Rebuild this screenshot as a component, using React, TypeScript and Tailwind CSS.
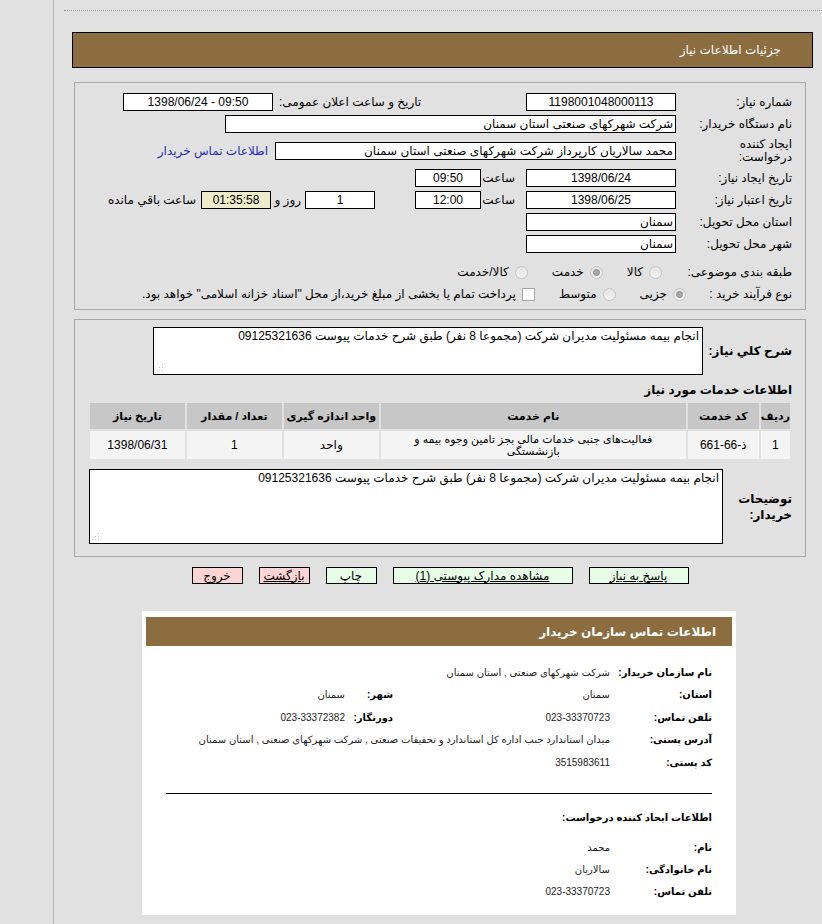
import React from 'react';

const Box = ({ w, children, align = 'center', bg = 'bg-white', ltr }: { w: string; children?: React.ReactNode; align?: 'center' | 'start'; bg?: string; ltr?: boolean }) => (
  <div dir={ltr ? 'ltr' : undefined} className={`h-[18px] shrink-0 border border-black ${w} ${bg} flex items-center ${align === 'center' ? 'justify-center' : 'justify-start'} px-[2px] text-[12px] leading-none whitespace-nowrap overflow-hidden`}>
    {children}
  </div>
);

const Radio = ({ checked }: { checked?: boolean }) => (
  <span className="w-[13px] h-[13px] shrink-0 rounded-full border border-[#c4c4c4] bg-gradient-to-b from-[#e4e4e4] to-[#f4f4f4] flex items-center justify-center">
    {checked && <span className="w-[7px] h-[7px] rounded-full border border-[#8a8a8a] bg-[#a8a8a8]" />}
  </span>
);

const Grip = () => (
  <svg className="absolute left-[2px] bottom-[2px]" width="8" height="8" viewBox="0 0 8 8">
    <rect x="6" y="0" width="1" height="1" fill="#c8c8c8" />
    <rect x="3" y="3" width="1" height="1" fill="#c8c8c8" />
    <rect x="6" y="3" width="1" height="1" fill="#c8c8c8" />
    <rect x="0" y="6" width="1" height="1" fill="#c8c8c8" />
    <rect x="3" y="6" width="1" height="1" fill="#c8c8c8" />
    <rect x="6" y="6" width="1" height="1" fill="#c8c8c8" />
  </svg>
);

const Label = ({ children, w = 'w-[116px]' }: { children: React.ReactNode; w?: string }) => (
  <div className={`${w} shrink-0 text-[12px] leading-[13px] whitespace-nowrap`}>{children}</div>
);

const desc = 'انجام بیمه مسئولیت مدیران شرکت (مجموعا 8 نفر) طبق شرح خدمات پیوست 09125321636';

const ContactRow = ({ label, value, label2, value2, h = 'h-[22px]' }: { label: string; value: string; label2?: string; value2?: string; h?: string }) => (
  <div className={`flex items-center ${h}`}>
    <div className="w-[102px] shrink-0 font-bold text-[10px] whitespace-nowrap">{label}</div>
    <div className="w-[217px] shrink-0 text-[10px] text-[#222] whitespace-nowrap">{value}</div>
    {label2 && <div className="w-[48px] shrink-0 font-bold text-[10px] whitespace-nowrap">{label2}</div>}
    {value2 && <div className="text-[10px] text-[#222] whitespace-nowrap">{value2}</div>}
  </div>
);

export default function App() {
  return (
    <div className="min-h-screen bg-[#e1e1e1] flex font-['Liberation_Sans','DejaVu_Sans',sans-serif] text-black overflow-hidden">
      <div className="w-[54px] shrink-0 border-r border-[#b4b4b4]" />
      <div className="flex-1 min-w-0 pb-[10px]" dir="rtl">
        <div className="pt-[10px] ml-[10px]">
          <div className="border-t border-dotted border-[#9a9a9a]" />
        </div>

        {/* header */}
        <div className="mt-[21px] ml-[18px] mr-[9px] h-[36px] bg-[#8c6d40] border border-black flex items-center pr-[31px] text-white text-[12px]">
          جزئیات اطلاعات نیاز
        </div>

        {/* panel 1 */}
        <div className="mt-[14px] ml-[20px] mr-[16px] border border-[#a8a8a8] pt-[8px] pb-[4px] pr-[13px] pl-[48px]">
          <div className="flex items-center h-[22px]">
            <Label>شماره نیاز:</Label>
            <Box w="w-[150px]">1198001048000113</Box>
            <div className="flex-1 flex items-center justify-end">
              <span className="text-[12px] whitespace-nowrap">تاریخ و ساعت اعلان عمومی:</span>
              <div className="mr-[6px]"><Box w="w-[150px]" ltr>1398/06/24 - 09:50</Box></div>
            </div>
          </div>
          <div className="flex items-center h-[22px]">
            <Label>نام دستگاه خریدار:</Label>
            <Box w="w-[451px]" align="start">شرکت شهرکهای صنعتی استان سمنان</Box>
          </div>
          <div className="flex items-center h-[32px]">
            <Label>ایجاد کننده<br />درخواست:</Label>
            <Box w="w-[401px]" align="start">محمد سالاریان کارپرداز شرکت شهرکهای صنعتی استان سمنان</Box>
            <span className="mr-[7px] text-[12px] text-[#2b2bb0] whitespace-nowrap">اطلاعات تماس خریدار</span>
          </div>
          <div className="flex items-center h-[22px]">
            <Label>تاریخ ایجاد نیاز:</Label>
            <Box w="w-[150px]">1398/06/24</Box>
            <span className="w-[45px] shrink-0 pr-[11px] text-[12px]">ساعت</span>
            <Box w="w-[66px]">09:50</Box>
          </div>
          <div className="flex items-center h-[22px]">
            <Label>تاریخ اعتبار نیاز:</Label>
            <Box w="w-[150px]">1398/06/25</Box>
            <span className="w-[45px] shrink-0 pr-[11px] text-[12px]">ساعت</span>
            <Box w="w-[66px]">12:00</Box>
            <div className="mr-[40px]"><Box w="w-[70px]">1</Box></div>
            <span className="w-[34px] shrink-0 pr-[4px] text-[12px] whitespace-nowrap">روز و</span>
            <Box w="w-[70px]" bg="bg-[#efeccb]">01:35:58</Box>
            <span className="mr-[5px] text-[12px] whitespace-nowrap">ساعت باقي مانده</span>
          </div>
          <div className="flex items-center h-[22px]">
            <Label>استان محل تحویل:</Label>
            <Box w="w-[150px]" align="start">سمنان</Box>
          </div>
          <div className="flex items-center h-[22px]">
            <Label>شهر محل تحویل:</Label>
            <Box w="w-[150px]" align="start">سمنان</Box>
          </div>
          <div className="flex items-center h-[22px] mt-[6px] text-[12px]">
            <Label>طبقه بندی موضوعی:</Label>
            <div className="flex items-center gap-[24px] mr-[14px]">
              <span className="flex items-center gap-[6px]"><Radio />کالا</span>
              <span className="flex items-center gap-[6px]"><Radio checked />خدمت</span>
              <span className="flex items-center gap-[6px]"><Radio />کالا/خدمت</span>
            </div>
          </div>
          <div className="flex items-center h-[22px] text-[12px]">
            <Label w="w-[106px]">نوع فرآیند خرید :</Label>
            <div className="flex items-center gap-[24px]">
              <span className="flex items-center gap-[6px]"><Radio checked />جزیی</span>
              <span className="flex items-center gap-[6px]"><Radio />متوسط</span>
              <span className="flex items-center gap-[6px] whitespace-nowrap">
                <span className="w-[13px] h-[13px] border border-[#a6a6a6] bg-white shrink-0" />
                پرداخت تمام یا بخشی از مبلغ خرید،از محل "اسناد خزانه اسلامی" خواهد بود.
              </span>
            </div>
          </div>
        </div>

        {/* panel 2 */}
        <div className="mt-[9px] ml-[20px] mr-[16px] border border-[#a8a8a8] pt-[7px] pb-[12px] pr-[13px] pl-[14px]">
          <div className="flex items-center">
            <div className="w-[89px] shrink-0 font-bold text-[12px] whitespace-nowrap">شرح کلي نیاز:</div>
            <div className="relative w-[550px] h-[48px] border border-black bg-white px-[3px] pt-[1px] text-[12px] leading-[15px]">
              {desc}
              <Grip />
            </div>
          </div>
          <div className="mt-[5px] h-[20px] flex items-center font-bold text-[12px]">اطلاعات خدمات مورد نیاز</div>
          <table className="mt-[1px] w-[704px] border-separate border-spacing-[2px] text-[11px]">
            <thead>
              <tr className="h-[26px] bg-[#c7c7c7] font-bold">
                <th className="w-[28px]">ردیف</th>
                <th className="w-[71px]">کد خدمت</th>
                <th className="w-[305px]">نام خدمت</th>
                <th className="w-[95px]">واحد اندازه گیری</th>
                <th className="w-[95px]">تعداد / مقدار</th>
                <th>تاریخ نیاز</th>
              </tr>
            </thead>
            <tbody>
              <tr className="h-[28px] bg-[#f4f4f4] text-center text-[12px]">
                <td>1</td>
                <td>ذ-66-661</td>
                <td className="text-[11px] leading-[12px] px-[16px]">فعالیت‌های جنبی خدمات مالی بجز تامین وجوه بیمه و بازنشستگی</td>
                <td>واحد</td>
                <td>1</td>
                <td>1398/06/31</td>
              </tr>
            </tbody>
          </table>
          <div className="flex items-center mt-[8px]">
            <div className="w-[69px] shrink-0 font-bold text-[12px] leading-[16px]">توضیحات<br />خریدار:</div>
            <div className="relative w-[637px] h-[75px] border border-black bg-white px-[3px] pt-[1px] text-[12px] leading-[15px]">
              {desc}
              <Grip />
            </div>
          </div>
        </div>

        {/* buttons */}
        <div className="mt-[10px] ml-[20px] mr-[16px] flex justify-center gap-[16px] text-[12px]">
          <div className="w-[100px] h-[17px] border border-black bg-[#e8fde8] flex items-center justify-center underline">پاسخ به نیاز</div>
          <div className="w-[180px] h-[17px] border border-black bg-[#e8fde8] flex items-center justify-center underline">مشاهده مدارک پیوستی (1)</div>
          <div className="w-[51px] h-[17px] border border-black bg-[#e8fde8] flex items-center justify-center">چاپ</div>
          <div className="w-[51px] h-[17px] border border-black bg-[#fdd4d4] flex items-center justify-center underline">بازگشت</div>
          <div className="w-[51px] h-[17px] border border-black bg-[#fdd4d4] flex items-center justify-center">خروج</div>
        </div>

        {/* contact panel */}
        <div className="mt-[27px] ml-[88px] mr-[86px] bg-white p-[4px] pt-[6px] pb-[13px]">
          <div className="h-[29px] bg-[#8c6d40] flex items-center pr-[16px] text-white font-bold text-[12px]">
            اطلاعات تماس سازمان خریدار
          </div>
          <div className="pr-[20px] pt-[15px]">
            <ContactRow label="نام سازمان خریدار:" value="شرکت شهرکهای صنعتی , استان سمنان" />
            <ContactRow label="استان:" value="سمنان" label2="شهر:" value2="سمنان" h="h-[23px]" />
            <ContactRow label="تلفن تماس:" value="023-33370723" label2="دورنگار:" value2="023-33372382" />
            <div className="flex items-center h-[23px]">
              <div className="w-[102px] shrink-0 font-bold text-[10px]">آدرس پستی:</div>
              <div className="text-[10px] text-[#222] whitespace-nowrap">میدان استاندارد جنب اداره کل استاندارد و تحقیقات صنعتی , شرکت شهرکهای صنعتی , استان سمنان</div>
            </div>
            <ContactRow label="کد پستی:" value="3515983611" />
          </div>
          <div className="mt-[20px] mx-[20px] border-t border-black" />
          <div className="pr-[20px]">
            <div className="mt-[13px] h-[20px] flex items-center font-bold text-[10px]">اطلاعات ایجاد کننده درخواست:</div>
            <div className="mt-[9px]">
              <ContactRow label="نام:" value="محمد" />
              <ContactRow label="نام خانوادگی:" value="سالاریان" />
              <ContactRow label="تلفن تماس:" value="023-33370723" />
            </div>
          </div>
        </div>
      </div>
    </div>
  );
}
